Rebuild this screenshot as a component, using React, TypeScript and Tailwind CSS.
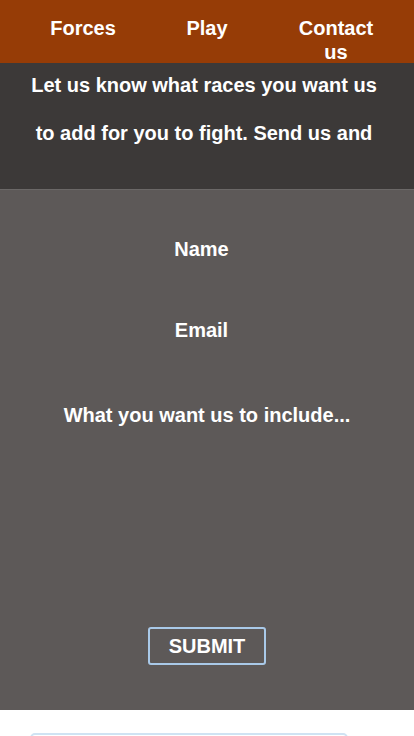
const NAV_LINKS = [
    {label: "Forces", className: "ml-[40px]"},
    {label: "Play", className: "ml-[38px]"},
    {label: "Contact us", className: "ml-[43px]"},
];

const App = () => {
    return (
        <div className="min-h-[736px] bg-white font-['Liberation_Sans',Arial,sans-serif] text-white">
            <nav className="h-[63px] bg-[#963c06]">
                <ul className="flex pt-[16px]">
                    {NAV_LINKS.map((link) => {
                        return <li key={link.label}
                                   className={`${link.className} w-[86px] text-center text-[20px] font-bold leading-[24px]`}>{link.label}</li>
                    })}
                </ul>
            </nav>
            <section className="h-[127px] bg-[#3c3938] border-b border-[#6b6867]">
                <div className="h-[94px] overflow-hidden pl-[27px] pr-[33px]">
                    <p className="-mt-[2px] text-center text-[20px] font-bold leading-[48px]">
                        Let us know what races you want us to add for you to fight. Send us and email with your ideas and we will see what we can do.
                    </p>
                </div>
            </section>
            <form className="h-[520px] bg-[#5d5958] flex flex-col items-center">
                <input type="text" placeholder="Name"
                       className="mt-[47px] mr-[11px] w-[300px] h-[24px] bg-transparent text-center text-[20px] font-bold placeholder:text-white outline-none"/>
                <input type="email" placeholder="Email"
                       className="mt-[57px] mr-[11px] w-[300px] h-[24px] bg-transparent text-center text-[20px] font-bold placeholder:text-white outline-none"/>
                <textarea placeholder="What you want us to include..."
                          className="mt-[58px] w-[340px] h-[180px] resize-none bg-transparent text-center text-[20px] font-bold placeholder:text-white outline-none"/>
                <button type="button"
                        className="mt-[47px] w-[118px] h-[38px] rounded-[3px] border-2 border-[#a9c9e8] text-[20px] font-bold">
                    SUBMIT
                </button>
            </form>
            <div className="pt-[23px] px-[30px]">
                <div className="w-[318px] h-[40px] rounded-t-[5px] border-2 border-[#cfe3f3]"></div>
            </div>
        </div>
    )
}

export default App;
